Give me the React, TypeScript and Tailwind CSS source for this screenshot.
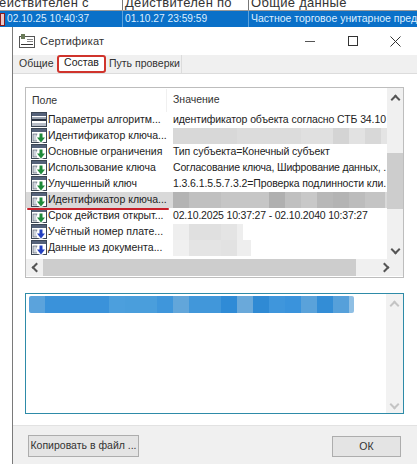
const font = "font-['Liberation_Sans',Arial,sans-serif]";

type Blur = { w: number; c: string };
type Row = {
  name: string;
  arrow: "none" | "green" | "blue";
  value?: string;
  blur?: Blur[];
  mark?: boolean;
  tight?: boolean;
};

const rows: Row[] = [
  { name: "Параметры алгоритм...", arrow: "none", value: "идентификатор объекта согласно СТБ 34.10" },
  {
    name: "Идентификатор ключа...",
    arrow: "green",
    blur: [
      { w: 64, c: "#d8d8d8" },
      { w: 64, c: "#dcdcdc" },
      { w: 32, c: "#e0e0e0" },
      { w: 16, c: "#d4d4d4" },
      { w: 16, c: "#e2e2e2" },
      { w: 16, c: "#d8d8d8" },
      { w: 6, c: "#e4e4e4" },
    ],
  },
  { name: "Основные ограничения", arrow: "green", value: "Тип субъекта=Конечный субъект" },
  { name: "Использование ключа", arrow: "green", value: "Согласование ключа, Шифрование данных, .", tight: true },
  { name: "Улучшенный ключ", arrow: "green", value: "1.3.6.1.5.5.7.3.2=Проверка подлинности кли." },
  {
    name: "Идентификатор ключа...",
    arrow: "green",
    mark: true,
    blur: [
      { w: 16, c: "#b4b4b4" },
      { w: 32, c: "#c0c0c0" },
      { w: 48, c: "#c6c6c6" },
      { w: 16, c: "#b0b0b0" },
      { w: 16, c: "#c0c0c0" },
      { w: 16, c: "#c8c8c8" },
      { w: 16, c: "#b8b8b8" },
      { w: 16, c: "#b4b4b4" },
      { w: 16, c: "#bcbcbc" },
      { w: 20, c: "#c4c4c4" },
    ],
  },
  { name: "Срок действия открыт...", arrow: "green", value: "02.10.2025 10:37:27 - 02.10.2040 10:37:27", tight: true },
  {
    name: "Учётный номер плате...",
    arrow: "blue",
    blur: [
      { w: 16, c: "#eeeeee" },
      { w: 32, c: "#e0e0e0" },
      { w: 16, c: "#e4e4e4" },
      { w: 6, c: "#eeeeee" },
    ],
  },
  {
    name: "Данные из документа...",
    arrow: "blue",
    blur: [
      { w: 16, c: "#f0f0f0" },
      { w: 32, c: "#e4e4e4" },
      { w: 16, c: "#e2e2e2" },
      { w: 14, c: "#eeeeee" },
    ],
  },
];

const valueBlur: Blur[] = [
  { w: 16, c: "#5ba3dc" },
  { w: 64, c: "#3a92da" },
  { w: 16, c: "#4c9fdd" },
  { w: 32, c: "#4a9edc" },
  { w: 16, c: "#3f96db" },
  { w: 16, c: "#62a6da" },
  { w: 32, c: "#4197da" },
  { w: 16, c: "#2f8bd6" },
  { w: 16, c: "#6aa9da" },
  { w: 16, c: "#2f8ad4" },
  { w: 16, c: "#3f96dc" },
  { w: 16, c: "#3a93dc" },
  { w: 16, c: "#5aa2da" },
  { w: 16, c: "#338dd6" },
  { w: 16, c: "#56a0da" },
  { w: 5, c: "#8fbfe4" },
];

// стрелки прокрутки: квадрат с двумя рамками, повёрнутый на 45°
function Chevron({ dir, light }: { dir: "up" | "down" | "left" | "right"; light?: boolean }) {
  const turn = {
    up: "mt-[3px] rotate-45",
    down: "-mt-[3px] rotate-[225deg]",
    left: "ml-[3px] -rotate-45",
    right: "-ml-[3px] rotate-[135deg]",
  }[dir];
  return (
    <div
      className={`h-[7px] w-[7px] shrink-0 border-l-2 border-t-2 ${turn} ${light ? "border-[#c4c4c4]" : "border-[#555]"}`}
    />
  );
}

function RowIcon({ arrow }: { arrow: Row["arrow"] }) {
  return (
    <svg width="16" height="16" viewBox="0 0 16 16" className="shrink-0">
      <rect x="0.5" y="0.5" width="15" height="14" fill="#fff" stroke="#3c4654" />
      <rect x="1" y="1" width="14" height="3" fill="#55627a" />
      {arrow === "none" ? (
        <>
          <rect x="1" y="5" width="14" height="2" fill="#9aa3b0" />
          <rect x="1" y="7" width="14" height="2" fill="#2d3644" />
          <rect x="1" y="11" width="14" height="3" fill="#b8bec8" />
        </>
      ) : (
        <>
          <rect x="2" y="6" width="4" height="7" fill="#cfd4dc" stroke="#4a5464" strokeWidth="0.6" />
          <circle cx="10" cy="10" r="5" fill="#fff" />
          <path d="M8.5 5.5h3v4H14l-4 5-4-5h2.5z" fill={arrow === "green" ? "#1e8a3a" : "#2340c0"} />
        </>
      )}
    </svg>
  );
}

function BlurBar({ parts, className }: { parts: Blur[]; className: string }) {
  return (
    <div className={`flex ${className}`}>
      {parts.map((p, i) => (
        <div key={i} className="h-full shrink-0" style={{ width: p.w, backgroundColor: p.c }} />
      ))}
    </div>
  );
}

export default function App() {
  return (
    <div className={`${font} relative h-[464px] w-[417px] overflow-hidden bg-white text-[10.5px] text-[#222]`}>
      {/* таблица за окном */}
      <div className="flex h-[11px] items-end overflow-hidden border-b border-[#9a9a9a] text-[13px] leading-[14px] text-[#333]">
        <div className="h-full w-[123px] shrink-0 border-r border-[#777]">
          <div className="-ml-[10px] -mt-[4px] tracking-[0.3px]">Действителен с</div>
        </div>
        <div className="h-full w-[126px] shrink-0 border-r border-[#777] pl-[2px]">
          <div className="-mt-[4px] tracking-[0.3px]">Действителен по</div>
        </div>
        <div className="h-full pl-[2px]">
          <div className="-mt-[4px] tracking-[0.3px]">Общие данные</div>
        </div>
      </div>
      <div className="flex h-[16px] items-center whitespace-nowrap bg-[#0a70c8] text-[10.2px] text-[#dbeeff]">
        <div className="flex h-full w-[123px] shrink-0 items-center border-r border-[#5da2dc]">
          <div className="h-[13px] w-[5px] shrink-0 border border-[#8a1c1c] bg-[#e9c8c8]" />
          <span className="ml-[2px]">02.10.25 10:40:37</span>
        </div>
        <div className="flex h-full w-[126px] shrink-0 items-center border-r border-[#5da2dc] pl-[2px]">
          01.10.27 23:59:59
        </div>
        <div className="pl-[2px] text-[10.5px]">Частное торговое унитарное предп</div>
      </div>

      {/* окно сертификата */}
      <div className="ml-[12px] flex h-[437px] w-[405px] flex-col border-l border-[#7a7a7a] bg-white">
        <div className="flex h-[28px] shrink-0 items-center pl-[6px]">
          <svg width="16" height="16" viewBox="0 0 16 16" className="shrink-0">
            <rect x="0.5" y="3.5" width="15" height="11" fill="#fff" stroke="#555" />
            <rect x="2" y="1" width="4" height="5" fill="#6a7a58" />
            <rect x="8" y="6" width="6" height="1" fill="#888" />
            <rect x="8" y="8" width="6" height="1" fill="#888" />
            <rect x="2" y="11" width="12" height="1" fill="#333" />
          </svg>
          <span className="ml-[5px] text-[11px] tracking-[0.2px] text-[#333]">Сертификат</span>
          <div className="ml-auto flex items-center pr-[16px]">
            <div className="h-px w-[10px] bg-[#555]" />
            <div className="ml-[33px] h-[10px] w-[10px] border border-[#333]" />
            <svg width="11" height="11" viewBox="0 0 11 11" className="ml-[32px]">
              <path d="M.5.5l10 10M10.5.5l-10 10" stroke="#333" fill="none" />
            </svg>
          </div>
        </div>

        {/* вкладки */}
        <div className="flex h-[19px] shrink-0 items-end border-b border-[#dcdcdc] bg-[#f0f0f0] pl-[6px]">
          <span className="w-[38px] shrink-0 self-center text-[#333]">Общие</span>
          <div className="flex h-[18px] w-[49px] shrink-0 items-center justify-center rounded-[3px] border-2 border-[#d0342c] bg-white">
            <span className="-mt-[2px]">Состав</span>
          </div>
          <span className="flex h-full w-[76px] items-center border-r border-[#dcdcdc] pl-[3px] text-[#333]">
            Путь проверки
          </span>
        </div>

        {/* содержимое вкладки */}
        <div className="flex flex-1 flex-col bg-white px-[12px] pt-[13px]">
          <div className="relative h-[191px] w-[379px] shrink-0 border border-[#bdbdbd]">
            <div className="flex h-[23.5px] items-center pt-[1px] text-[#333]">
              <div className="h-full w-[141px] shrink-0 border-r border-[#f0f0f0] pl-[6px] leading-[22px]">Поле</div>
              <div className="pl-[6px]">Значение</div>
            </div>
            <div>
              {rows.map((r, i) => (
                <div key={i} className={`flex h-[16.1px] items-center ${r.mark ? "bg-[#d9d9d9]" : ""}`}>
                  <div className="flex w-[141px] shrink-0 items-center pl-[5px]">
                    <RowIcon arrow={r.arrow} />
                    <span className="ml-[1px] whitespace-nowrap">{r.name}</span>
                  </div>
                  {r.value ? (
                    <span className={`whitespace-nowrap pl-[6px] ${r.tight ? "tracking-[-0.18px]" : "tracking-[-0.1px]"}`}>
                      {r.value}
                    </span>
                  ) : (
                    <BlurBar parts={r.blur ?? []} className="h-full pl-[6px]" />
                  )}
                </div>
              ))}
            </div>

            {/* вертикальная прокрутка */}
            <div className="absolute bottom-[18px] right-0 top-0 z-10 flex w-[16px] flex-col items-center bg-[#f0f0f0]">
              <div className="flex h-[17px] w-full shrink-0 items-center justify-center pt-[3px]">
                <Chevron dir="up" />
              </div>
              <div className="mt-[48px] h-[56px] w-full shrink-0 bg-[#cdcdcd]" />
              <div className="mt-auto flex h-[17px] w-full shrink-0 items-center justify-center">
                <Chevron dir="down" />
              </div>
            </div>

            {/* горизонтальная прокрутка */}
            <div className="absolute bottom-[1px] left-0 right-0 z-10 flex h-[17px] items-center bg-[#f0f0f0]">
              <div className="flex w-[17px] shrink-0 justify-center">
                <Chevron dir="left" />
              </div>
              <div className="h-full w-[313px] bg-[#cdcdcd]" />
              <div className="ml-auto flex w-[34px] shrink-0 justify-center">
                <Chevron dir="right" />
              </div>
            </div>

            {/* красная линия */}
            <div className="absolute left-[1px] top-[120px] h-[2px] w-[142px] rounded-full bg-[#c8202a]" />
          </div>

          <div className="relative mt-[15px] h-[121px] w-[379px] shrink-0 border border-[#2e8ba8]">
            <BlurBar parts={valueBlur} className="ml-[3px] mt-[2px] h-[17px] w-[325px] overflow-hidden rounded-[2px]" />
            <div className="absolute bottom-0 right-0 top-0 flex w-[17px] flex-col items-center justify-between bg-[#f2f2f2] py-[5px]">
              <Chevron dir="up" light />
              <Chevron dir="down" light />
            </div>
          </div>
        </div>

        {/* кнопки */}
        <div className="flex h-[39px] shrink-0 items-start justify-between border-t border-[#e2e2e2] bg-[#f0f0f0] px-[15px] pt-[9px]">
          <div className="flex h-[22px] w-[111px] items-center justify-center whitespace-nowrap border border-[#adadad] bg-[#e4e4e4] text-[#333]">
            Копировать в файл ...
          </div>
          <div className="mt-[1px] mr-[1px] flex h-[21px] w-[69px] items-center justify-center border border-[#adadad] bg-[#e4e4e4] text-[#333]">
            ОК
          </div>
        </div>
      </div>
    </div>
  );
}
